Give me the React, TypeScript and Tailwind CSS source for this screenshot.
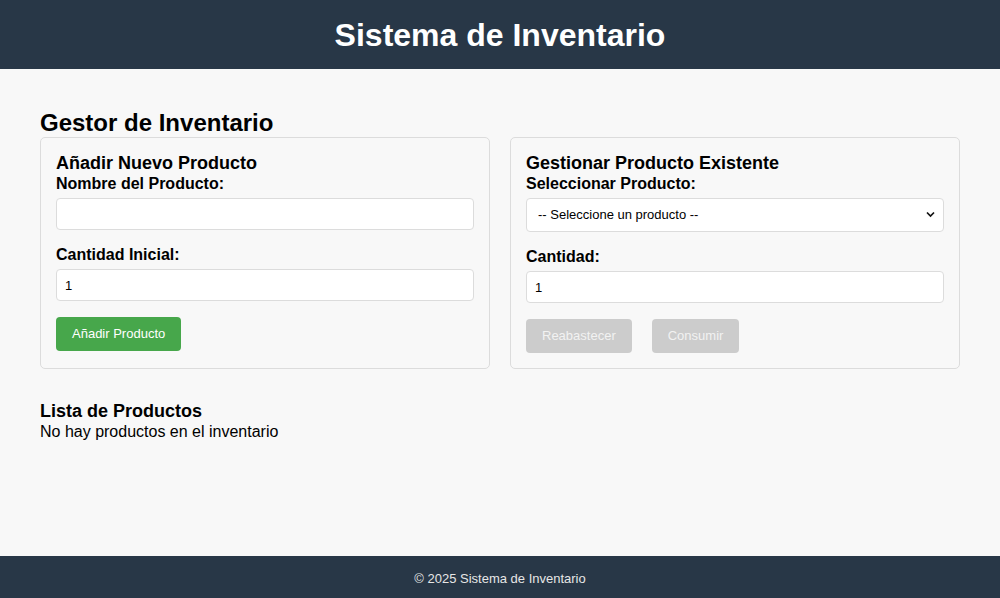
import React from "react";

const font = { fontFamily: '"Liberation Sans", Arial, Helvetica, sans-serif' };

export default function App() {
  const [nombre, setNombre] = React.useState("");
  const [cantidadInicial, setCantidadInicial] = React.useState("1");
  const [cantidad, setCantidad] = React.useState("1");
  const [seleccion, setSeleccion] = React.useState("");

  return (
    <div className="min-h-screen flex flex-col bg-[#f8f8f8] text-black" style={font}>
      {/* Header */}
      <header className="h-[69px] bg-[#283747] flex items-center justify-center">
        <h1 className="text-[32px] font-bold text-white leading-none">Sistema de Inventario</h1>
      </header>

      {/* Main */}
      <main className="flex-1 px-10 pt-10">
        <h2 className="text-[24px] font-bold leading-[28px]">Gestor de Inventario</h2>

        <div className="grid grid-cols-2 gap-5">
          {/* Añadir */}
          <div className="border border-[#dcdcdc] rounded-[5px] p-[15px]">
            <h3 className="text-[18px] font-bold leading-[21px]">Añadir Nuevo Producto</h3>
            <label className="block text-[16px] font-bold leading-[19px] mb-[5px]">Nombre del Producto:</label>
            <input
              value={nombre}
              onChange={(e) => setNombre(e.target.value)}
              className="block w-full h-[32px] bg-white border border-[#dcdcdc] rounded-[4px] px-2 text-[13px] outline-none mb-[15px]"
            />
            <label className="block text-[16px] font-bold leading-[19px] mb-[5px]">Cantidad Inicial:</label>
            <input
              type="number"
              value={cantidadInicial}
              onChange={(e) => setCantidadInicial(e.target.value)}
              className="block w-full h-[32px] bg-white border border-[#dcdcdc] rounded-[4px] px-2 text-[13px] outline-none appearance-none [&::-webkit-inner-spin-button]:appearance-none"
            />
            <button className="mt-4 h-[34px] px-4 bg-[#47a74b] text-white text-[13px] rounded-[4px]">
              Añadir Producto
            </button>
          </div>

          {/* Gestionar */}
          <div className="border border-[#dcdcdc] rounded-[5px] p-[15px]">
            <h3 className="text-[18px] font-bold leading-[21px]">Gestionar Producto Existente</h3>
            <label className="block text-[16px] font-bold leading-[19px] mb-[5px]">Seleccionar Producto:</label>
            <div className="relative mb-[15px]">
              <select
                value={seleccion}
                onChange={(e) => setSeleccion(e.target.value)}
                className="block w-full h-[34px] bg-white border border-[#dcdcdc] rounded-[4px] pl-[11px] text-[13px] text-black outline-none appearance-none"
              >
                <option value="">-- Seleccione un producto --</option>
              </select>
              <svg
                className="absolute right-[9px] top-[13px] pointer-events-none"
                width="9"
                height="7"
                viewBox="0 0 9 7"
              >
                <path d="M1 1.5 L4.5 5 L8 1.5" fill="none" stroke="#111" strokeWidth="1.7" />
              </svg>
            </div>
            <label className="block text-[16px] font-bold leading-[19px] mb-[5px]">Cantidad:</label>
            <input
              type="number"
              value={cantidad}
              onChange={(e) => setCantidad(e.target.value)}
              className="block w-full h-[32px] bg-white border border-[#dcdcdc] rounded-[4px] px-2 text-[13px] outline-none appearance-none [&::-webkit-inner-spin-button]:appearance-none"
            />
            <div className="mt-4 flex gap-5">
              <button disabled className="h-[34px] px-4 bg-[#cccccc] text-[#f2f2f2] text-[13px] rounded-[4px]">
                Reabastecer
              </button>
              <button disabled className="h-[34px] px-4 bg-[#cccccc] text-[#f2f2f2] text-[13px] rounded-[4px]">
                Consumir
              </button>
            </div>
          </div>
        </div>

        {/* Lista */}
        <h3 className="mt-8 text-[18px] font-bold leading-[21px]">Lista de Productos</h3>
        <p className="text-[16px] leading-[19px]">No hay productos en el inventario</p>
      </main>

      {/* Footer */}
      <footer className="h-[42px] bg-[#283747] flex items-center justify-center pt-1">
        <p className="text-[13px] text-[#e6e6e6]">© 2025 Sistema de Inventario</p>
      </footer>
    </div>
  );
}
